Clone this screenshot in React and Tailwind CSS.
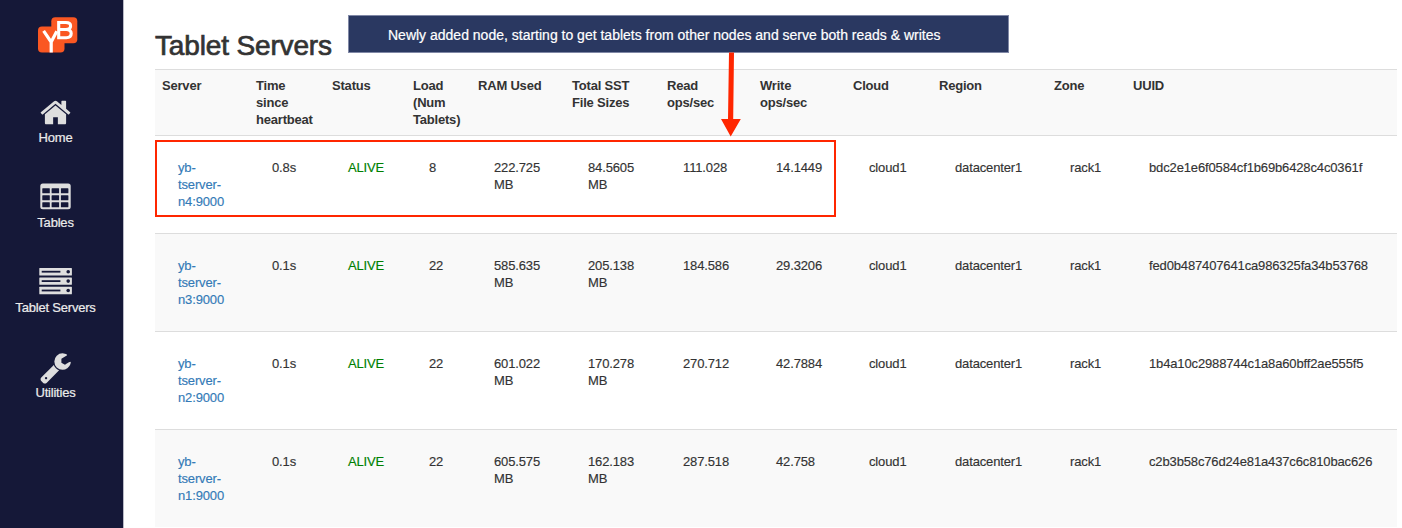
const columns = [
  { label: 'Server', width: 'w-[94px]' },
  { label: 'Time since heartbeat', width: 'w-[76px]' },
  { label: 'Status', width: 'w-[81px]' },
  { label: 'Load (Num Tablets)', width: 'w-[65px]' },
  { label: 'RAM Used', width: 'w-[94px]' },
  { label: 'Total SST File Sizes', width: 'w-[95px]' },
  { label: 'Read ops/sec', width: 'w-[93px]' },
  { label: 'Write ops/sec', width: 'w-[93px]' },
  { label: 'Cloud', width: 'w-[86px]' },
  { label: 'Region', width: 'w-[115px]' },
  { label: 'Zone', width: 'w-[79px]' },
  { label: 'UUID', width: 'w-[271px]' },
];

const servers = [
  ['yb-tserver-n4:9000', '0.8s', 'ALIVE', '8', '222.725 MB', '84.5605 MB', '111.028', '14.1449', 'cloud1', 'datacenter1', 'rack1', 'bdc2e1e6f0584cf1b69b6428c4c0361f'],
  ['yb-tserver-n3:9000', '0.1s', 'ALIVE', '22', '585.635 MB', '205.138 MB', '184.586', '29.3206', 'cloud1', 'datacenter1', 'rack1', 'fed0b487407641ca986325fa34b53768'],
  ['yb-tserver-n2:9000', '0.1s', 'ALIVE', '22', '601.022 MB', '170.278 MB', '270.712', '42.7884', 'cloud1', 'datacenter1', 'rack1', '1b4a10c2988744c1a8a60bff2ae555f5'],
  ['yb-tserver-n1:9000', '0.1s', 'ALIVE', '22', '605.575 MB', '162.183 MB', '287.518', '42.758', 'cloud1', 'datacenter1', 'rack1', 'c2b3b58c76d24e81a437c6c810bac626'],
];

function Logo() {
  return (
    <svg className="h-[36px] w-[40px]" viewBox="0 0 40 36">
      <rect x="0" y="9.5" width="26.5" height="26" rx="4" fill="#fa5722" />
      <rect x="13.3" y="0.3" width="26" height="26" rx="4" fill="#fa5722" />
      <path d="M5.6 13.800L13.2 25V35.5M18.800 14.200L13.2 25" fill="none" stroke="#fff" strokeWidth="3.2" />
      <path
        d="M20.7 5.500h7.200c3 0 4.700 1.300 4.700 3.500s-1.600 3.500-4.700 3.500h-7.200zM20.700 12.500h7.600c3.200 0 4.900 1.500 4.900 4.100s-1.700 4.100-4.900 4.100h-7.600z"
        fill="none"
        stroke="#fff"
        strokeWidth="3.1"
      />
    </svg>
  );
}

function HomeIcon() {
  return (
    <svg className="h-[33px] w-[33px]" viewBox="0 0 1792 1792" fill="currentColor">
      <path d="M1472 992v480q0 26-19 45t-45 19h-384v-384h-256v384h-384q-26 0-45-19t-19-45v-480q0-1 .5-3t.5-3l575-474 575 474q1 2 1 6zm223-69l-62 74q-8 9-21 11h-3q-13 0-21-7l-692-577-692 577q-12 8-24 7-13-2-21-11l-62-74q-8-10-7-23.500t11-21.500l719-599q32-26 76-26t76 26l244 204v-195q0-14 9-23t23-9h192q14 0 23 9t9 23v408l219 182q10 8 11 21.500t-7 23.500z" />
    </svg>
  );
}

function TablesIcon() {
  const xs = [2.300, 11.600, 20.900];
  const ys = [4.800, 11.800, 18.800];
  return (
    <svg className="h-[33px] w-[31px]" viewBox="0 -2.500 31 33">
      <rect x="0.300" y="0" width="30.400" height="25.700" rx="2.500" fill="currentColor" />
      {xs.map((x) => ys.map((y) => (
        <rect key={`${x}-${y}`} x={x} y={y} width="7.500" height="4.900" rx="0.500" fill="#151838" />
      )))}
    </svg>
  );
}

function ServersIcon() {
  return (
    <svg className="h-[33px] w-[33px]" viewBox="0 -2 33 33">
      {[0, 9.400, 18.800].map((y) => (
        <g key={y}>
          <rect x="0.300" y={y} width="32.600" height="7.400" rx="0.500" fill="currentColor" />
          <rect x="2.700" y={y + 2.800} width="18.700" height="1.800" fill="#151838" />
          <circle cx="29.200" cy={y + 3.700} r="1.800" fill="#151838" />
        </g>
      ))}
    </svg>
  );
}

function WrenchIcon() {
  return (
    <svg className="h-[33px] w-[33px]" viewBox="0 0 1792 1792" fill="currentColor">
      <path d="M448 1472q0-26-19-45t-45-19-45 19-19 45 19 45 45 19 45-19 19-45zm644-420l-682 682q-37 37-90 37-52 0-91-37l-106-108q-38-36-38-90 0-53 38-91l681-681q39 98 114.500 173.500t173.500 114.500zm634-435q0 39-23 106-47 134-164.500 217.500t-258.500 83.500q-185 0-316.500-131.500t-131.500-316.500 131.500-316.500 316.500-131.500q58 0 121.500 16.500t107.500 46.500q16 11 16 28t-16 28l-293 169v224l193 107q5-3 79-48.500t135.500-81 70.500-35.500q15 0 23.500 10t8.500 25z" />
    </svg>
  );
}

function NavItem({ icon, label }) {
  return (
    <a className="flex h-[85px] flex-col items-center text-[#dedede]">
      {icon}
      <span className="text-[13px] leading-[17px] tracking-[-0.2px] text-[#ececec] [-webkit-text-stroke:0.2px_#ececec]">{label}</span>
    </a>
  );
}

function Sidebar() {
  return (
    <nav className="flex h-full w-[124px] shrink-0 flex-col border-r border-[#b9bac6] bg-[#151838]">
      <div className="flex h-[96px] justify-center pt-[17px] pr-[8px]">
        <Logo />
      </div>
      <div className="flex w-[111px] flex-col">
        <NavItem icon={<HomeIcon />} label="Home" />
        <NavItem icon={<TablesIcon />} label="Tables" />
        <NavItem icon={<ServersIcon />} label="Tablet Servers" />
        <NavItem icon={<WrenchIcon />} label="Utilities" />
      </div>
    </nav>
  );
}

function ServerTable() {
  return (
    <table className="w-[1242px] table-fixed border-collapse text-left text-[13px] leading-[17px] text-[#333]">
      <thead>
        <tr className="h-[66px] bg-[#f9f9f9] shadow-[inset_0_1px_0_#ddd]">
          {columns.map((c) => (
            <th key={c.label} className={`${c.width} px-[7px] pt-[8px] pb-0 align-top font-bold tracking-[-0.2px]`}>
              {c.label}
            </th>
          ))}
        </tr>
      </thead>
      <tbody className="tracking-[-0.14px] [-webkit-text-stroke-width:0.15px]">
        {servers.map((row) => (
          <tr key={row[0]} className="h-[98px] shadow-[inset_0_1px_0_#ddd] even:bg-[#f9f9f9]">
            {row.map((value, i) => (
              <td key={columns[i].label} className="pt-[24px] pr-[18px] pb-0 pl-[23px] align-top">
                {i === 0 && <a className="text-[#337ab7]">{value}</a>}
                {i === 2 && <span className="text-[#008000]">{value}</span>}
                {i !== 0 && i !== 2 && value}
              </td>
            ))}
          </tr>
        ))}
      </tbody>
    </table>
  );
}

export default function App() {
  return (
    <div className="relative flex h-[528px] w-[1402px] overflow-hidden bg-white font-['Liberation_Sans',Arial,sans-serif]">
      <Sidebar />
      <main className="flex flex-col pl-[31px]">
        <header className="flex h-[69px] items-start">
          <h1 className="w-[193px] pt-[30px] text-[28px] leading-[32px] tracking-[-0.15px] whitespace-nowrap text-[#333] [-webkit-text-stroke:0.7px_#333]">
            Tablet Servers
          </h1>
          <div className="mt-[15px] flex h-[38px] w-[661px] items-center border border-[#8088a6] bg-[#2a3861] pt-[2px] pl-[39px] text-[14px] whitespace-nowrap text-white [-webkit-text-stroke:0.2px_#fff]">
            Newly added node, starting to get tablets from other nodes and serve both reads &amp; writes
          </div>
        </header>
        <ServerTable />
      </main>
      <div className="absolute top-[140px] left-[155px] h-[77px] w-[681px] border-2 border-[#ff2600]" />
      <svg className="absolute top-[52px] left-[720px] h-[86px] w-[22px]" viewBox="0 0 22 86">
        <path d="M9 0.500h5L13.200 67H20.800L10.700 84.500L1 67H8z" fill="#ff2600" />
      </svg>
    </div>
  );
}
